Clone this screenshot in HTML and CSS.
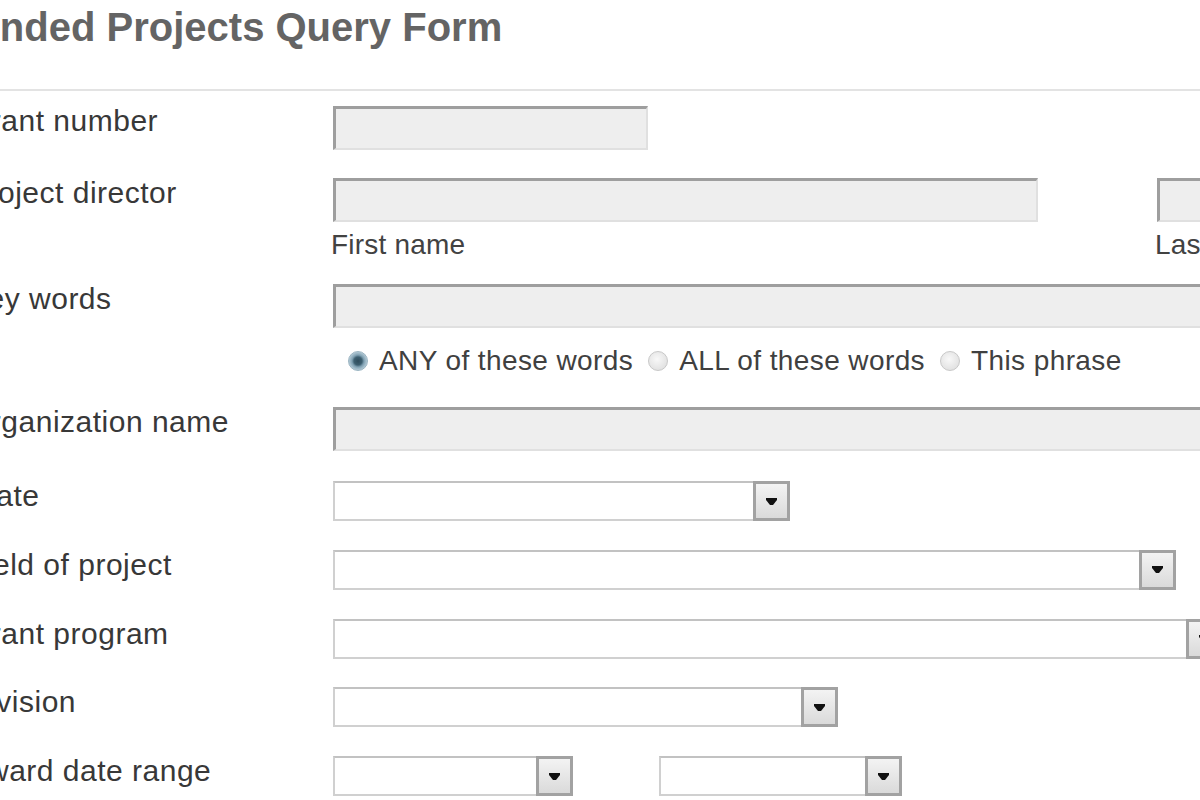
FILE: index.html
```html
<!DOCTYPE html>
<html lang="en">
  <head>
    <meta charset="UTF-8" />
    <meta name="viewport" content="width=device-width, initial-scale=1.0" />
    <title>Funded Projects Query Form</title>
    <link rel="stylesheet" href="styles.css">
  </head>
  <body>
    <div class="page">
      <h1 class="page-title">Funded Projects Query Form</h1>
      <hr class="title-rule" />

      <form class="query-form">
        <!-- Grant number -->
        <div class="form-row row-text">
          <label class="form-label" for="grantNumber">Grant number</label>
          <div class="form-field">
            <input type="text" id="grantNumber" class="text-input input-grant" />
          </div>
        </div>

        <!-- Project director -->
        <div class="form-row row-director">
          <label class="form-label" for="firstName">Project director</label>
          <div class="form-field name-fields">
            <div class="name-field">
              <input type="text" id="firstName" class="text-input input-first" />
              <span class="sub-label">First name</span>
            </div>
            <div class="name-field">
              <input type="text" id="lastName" class="text-input input-last" />
              <span class="sub-label">Last name</span>
            </div>
          </div>
        </div>

        <!-- Key words -->
        <div class="form-row row-keywords">
          <label class="form-label" for="keywords">Key words</label>
          <div class="form-field">
            <input type="text" id="keywords" class="text-input input-wide" />
            <div class="radio-group">
              <label class="radio-option"><input type="radio" name="match" class="radio" checked />ANY of these words</label>
              <label class="radio-option"><input type="radio" name="match" class="radio" />ALL of these words</label>
              <label class="radio-option"><input type="radio" name="match" class="radio" />This phrase</label>
            </div>
          </div>
        </div>

        <!-- Organization name -->
        <div class="form-row row-text row-org">
          <label class="form-label" for="orgName">Organization name</label>
          <div class="form-field">
            <input type="text" id="orgName" class="text-input input-wide" />
          </div>
        </div>

        <!-- State -->
        <div class="form-row row-select">
          <label class="form-label" for="state">State</label>
          <div class="form-field">
            <div class="select-box select-state">
              <select id="state" class="select-input"><option></option></select>
              <span class="select-arrow"><svg viewBox="0 0 11 7" width="11" height="7"><path d="M0 0h11v2l-4 5h-3l-4-5z" /></svg></span>
            </div>
          </div>
        </div>

        <!-- Field of project -->
        <div class="form-row row-select">
          <label class="form-label" for="field">Field of project</label>
          <div class="form-field">
            <div class="select-box select-field">
              <select id="field" class="select-input"><option></option></select>
              <span class="select-arrow"><svg viewBox="0 0 11 7" width="11" height="7"><path d="M0 0h11v2l-4 5h-3l-4-5z" /></svg></span>
            </div>
          </div>
        </div>

        <!-- Grant program -->
        <div class="form-row row-select">
          <label class="form-label" for="program">Grant program</label>
          <div class="form-field">
            <div class="select-box select-program">
              <select id="program" class="select-input"><option></option></select>
              <span class="select-arrow"><svg viewBox="0 0 11 7" width="11" height="7"><path d="M0 0h11v2l-4 5h-3l-4-5z" /></svg></span>
            </div>
          </div>
        </div>

        <!-- Division -->
        <div class="form-row row-select">
          <label class="form-label" for="division">Division</label>
          <div class="form-field">
            <div class="select-box select-division">
              <select id="division" class="select-input"><option></option></select>
              <span class="select-arrow"><svg viewBox="0 0 11 7" width="11" height="7"><path d="M0 0h11v2l-4 5h-3l-4-5z" /></svg></span>
            </div>
          </div>
        </div>

        <!-- Award date range -->
        <div class="form-row row-select">
          <label class="form-label" for="awardFrom">Award date range</label>
          <div class="form-field date-range">
            <div class="select-box select-from">
              <select id="awardFrom" class="select-input"><option></option></select>
              <span class="select-arrow"><svg viewBox="0 0 11 7" width="11" height="7"><path d="M0 0h11v2l-4 5h-3l-4-5z" /></svg></span>
            </div>
            <div class="select-box select-to">
              <select id="awardTo" class="select-input"><option></option></select>
              <span class="select-arrow"><svg viewBox="0 0 11 7" width="11" height="7"><path d="M0 0h11v2l-4 5h-3l-4-5z" /></svg></span>
            </div>
          </div>
        </div>
      </form>
    </div>
  </body>
</html>
```

FILE: styles.css
```css
* {
  box-sizing: border-box;
}

html,
body {
  margin: 0;
  padding: 0;
  height: 100%;
  overflow: hidden;
  background: #fff;
  font-family: "Liberation Sans", Arial, sans-serif;
}

.page {
  margin-left: -33px;
}

.page-title {
  font-size: 40px;
  font-weight: bold;
  line-height: 46px;
  color: #646464;
  margin: 0 0 0 -16px;
  padding-top: 4px;
  white-space: nowrap;
}

.title-rule {
  border: 0;
  border-top: 2px solid #e3e3e3;
  margin: 39px 0 15px;
}

.form-row {
  display: flex;
  align-items: flex-start;
}

.form-label {
  flex: 0 0 366px;
  font-size: 30px;
  line-height: 34px;
  letter-spacing: 0.5px;
  margin-top: -2px;
  color: #383838;
  white-space: nowrap;
}

.form-field {
  flex: 1;
  min-width: 0;
}

/* text boxes */
.text-input {
  display: block;
  height: 44px;
  background: #eeeeee;
  border-style: solid;
  border-width: 3px 2px 2px 3px;
  border-color: #9e9e9e #e0e0e0 #e0e0e0 #9e9e9e;
  font: inherit;
  font-size: 28px;
}

.input-grant {
  width: 315px;
}

.input-first {
  width: 705px;
}

.input-last {
  width: 200px;
}

.input-wide {
  width: 900px;
}

.row-text {
  margin-bottom: 28px;
}

.row-org {
  margin-bottom: 30px;
}

.name-fields {
  display: flex;
  gap: 119px;
}

.sub-label {
  display: block;
  margin: 7px 0 0 -2px;
  font-size: 28px;
  line-height: 32px;
  letter-spacing: 0.2px;
  color: #424242;
  white-space: nowrap;
}

.row-director {
  margin-bottom: 23px;
}

/* radio buttons */
.row-keywords {
  margin-bottom: 30px;
}

.radio-group {
  display: flex;
  align-items: center;
  margin-top: 17px;
  font-size: 28px;
  line-height: 32px;
  letter-spacing: 0.4px;
  color: #404040;
  white-space: nowrap;
}

.radio-option {
  display: flex;
  align-items: center;
}

.radio {
  appearance: none;
  -webkit-appearance: none;
  width: 20px;
  height: 20px;
  margin: 0 11px 0 15px;
  border-radius: 50%;
  border: 1px solid #c8c8c8;
  background: radial-gradient(circle at 45% 40%, #f8f8f8, #dadada);
}

.radio:checked {
  border-color: #9ab4c2;
  background: radial-gradient(circle, #2e4c5c 0, #3d5f70 4px, #7fa0b2 6px, #c3d6e0 10px);
}

/* drop downs */
.row-select {
  margin-bottom: 28.75px;
}

.select-box {
  display: flex;
  height: 40px;
  background: #fff;
  border: 2px solid #d0d0d0;
  border-top-color: #c2c2c2;
}

.select-input {
  flex: 1;
  min-width: 0;
  appearance: none;
  -webkit-appearance: none;
  border: 0;
  background: transparent;
  font: inherit;
}

.select-arrow {
  flex: 0 0 37px;
  margin: -2px -2px -2px 0;
  display: flex;
  align-items: center;
  justify-content: center;
  border: 3px solid #a2a2a2;
  background: linear-gradient(#f3f3f3, #dadada);
}

.select-arrow svg {
  fill: #111;
}

.select-state {
  width: 457px;
}

.select-field {
  width: 843px;
}

.select-program {
  width: 890px;
}

.select-division {
  width: 505px;
}

.date-range {
  display: flex;
  gap: 86px;
}

.select-from {
  width: 240px;
}

.select-to {
  width: 243px;
}
```
